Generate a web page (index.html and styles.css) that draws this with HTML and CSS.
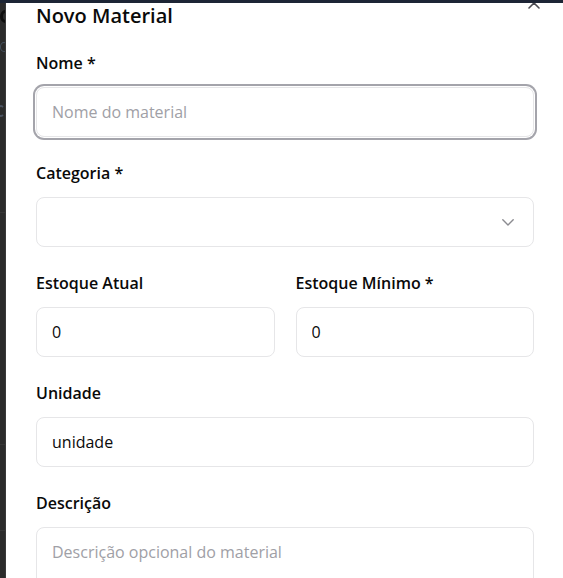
FILE: index.html
```html
<!DOCTYPE html>
<html lang="pt-BR">
<head>
<meta charset="utf-8">
<title>Novo Material</title>
<link rel="stylesheet" href="styles.css">
</head>
<body>
<div class="topbar"></div>
<div class="stage">
  <div class="behind" aria-hidden="true">
    <div class="frag frag-title"></div>
    <div class="frag frag-sub"></div>
    <div class="frag frag-s"></div>
    <div class="rule rule-1"></div>
    <div class="rule rule-2"></div>
    <div class="rule rule-3"></div>
  </div>
  <div class="dialog">
    <button class="close" aria-label="Fechar">
      <svg width="12" height="12" viewBox="0 0 12 12" fill="none" stroke="currentColor" stroke-width="1.6" stroke-linecap="round"><path d="M1 1 11 11M11 1 1 11"/></svg>
    </button>
    <h2 class="title">Novo Material</h2>
    <form class="form">
      <div class="field">
        <label class="label">Nome *</label>
        <input class="input input-focus" type="text" placeholder="Nome do material">
      </div>
      <div class="field">
        <label class="label">Categoria *</label>
        <div class="input select">
          <span></span>
          <svg class="chev" width="12" height="7" viewBox="0 0 12 7" fill="none" stroke="currentColor" stroke-width="1.4" stroke-linecap="round" stroke-linejoin="round"><path d="M0.8 0.8 6 6 11.2 0.8"/></svg>
        </div>
      </div>
      <div class="row">
        <div class="field">
          <label class="label">Estoque Atual</label>
          <input class="input" type="text" value="0">
        </div>
        <div class="field">
          <label class="label">Estoque Mínimo *</label>
          <input class="input" type="text" value="0">
        </div>
      </div>
      <div class="field">
        <label class="label">Unidade</label>
        <input class="input" type="text" value="unidade">
      </div>
      <div class="field">
        <label class="label">Descrição</label>
        <textarea class="input textarea" placeholder="Descrição opcional do material"></textarea>
      </div>
    </form>
  </div>
</div>
</body>
</html>
```
FILE: styles.css
```css
* { box-sizing: border-box; }
html, body { margin: 0; padding: 0; }
body {
  width: 563px;
  height: 578px;
  overflow: hidden;
  background: #2b2b2b;
  font-family: "Open Sans", "Noto Sans", sans-serif;
  color: #0a0a0a;
}
.topbar {
  height: 3px;
  background: #1d2535;
}
.stage {
  display: flex;
  height: 575px;
}
.behind {
  width: 6px;
  flex: none;
  overflow: hidden;
  display: flex;
  flex-direction: column;
  border-right: 1px solid #3a3a3a;
}
.frag {
  flex: none;
  border-radius: 50%;
}
.frag-title {
  width: 11px;
  height: 13px;
  border: 3px solid #0d0d0d;
  margin-top: 7px;
}
.frag-sub {
  width: 8px;
  height: 10px;
  border: 1.5px solid #44505e;
  margin-top: 19px;
}
.frag-s {
  width: 8px;
  height: 12px;
  border: 2px solid #4a5260;
  border-right-color: transparent;
  margin-top: 53px;
  margin-left: -3px;
}
.rule { flex: none; border-bottom: 1px solid #363636; }
.rule-1 { margin-top: 95px; }
.rule-2 { margin-top: 231px; }
.rule-3 { margin-top: 85px; }

.dialog {
  flex: 1;
  position: relative;
  overflow: hidden;
  background: #fff;
  padding: 0 29px 0 30px;
}
.close {
  position: absolute;
  top: -6.5px;
  right: 23px;
  width: 12px;
  height: 12px;
  padding: 0;
  border: 0;
  background: none;
  color: #4b4b52;
  display: block;
}
.close svg { display: block; }
.title {
  margin: 0 0 22px;
  font-size: 20px;
  line-height: 26px;
  font-weight: 560;
}
.form {
  display: flex;
  flex-direction: column;
  gap: 24px;
}
.field {
  display: flex;
  flex-direction: column;
  gap: 12px;
  min-width: 0;
}
.row {
  display: grid;
  grid-template-columns: 1fr 1fr;
  gap: 21px;
}
.label {
  font-size: 16px;
  line-height: 24px;
  font-weight: 560;
}
.input {
  display: block;
  width: 100%;
  height: 50px;
  border: 1px solid #e6e6e8;
  border-radius: 8px;
  background: #fff;
  padding: 0 15px;
  font: inherit;
  font-size: 16px;
  color: #0a0a0a;
  outline: none;
}
.input::placeholder { color: #a0a0a6; }
.input-focus {
  box-shadow: 0 0 0 1px #fff, 0 0 0 3px #a4a4ab;
}
.select {
  display: flex;
  align-items: center;
  justify-content: space-between;
}
.chev {
  color: #8b8b90;
  margin-right: 4px;
}
.textarea {
  height: 90px;
  padding: 12px 15px;
  resize: none;
  line-height: 24px;
}
```
